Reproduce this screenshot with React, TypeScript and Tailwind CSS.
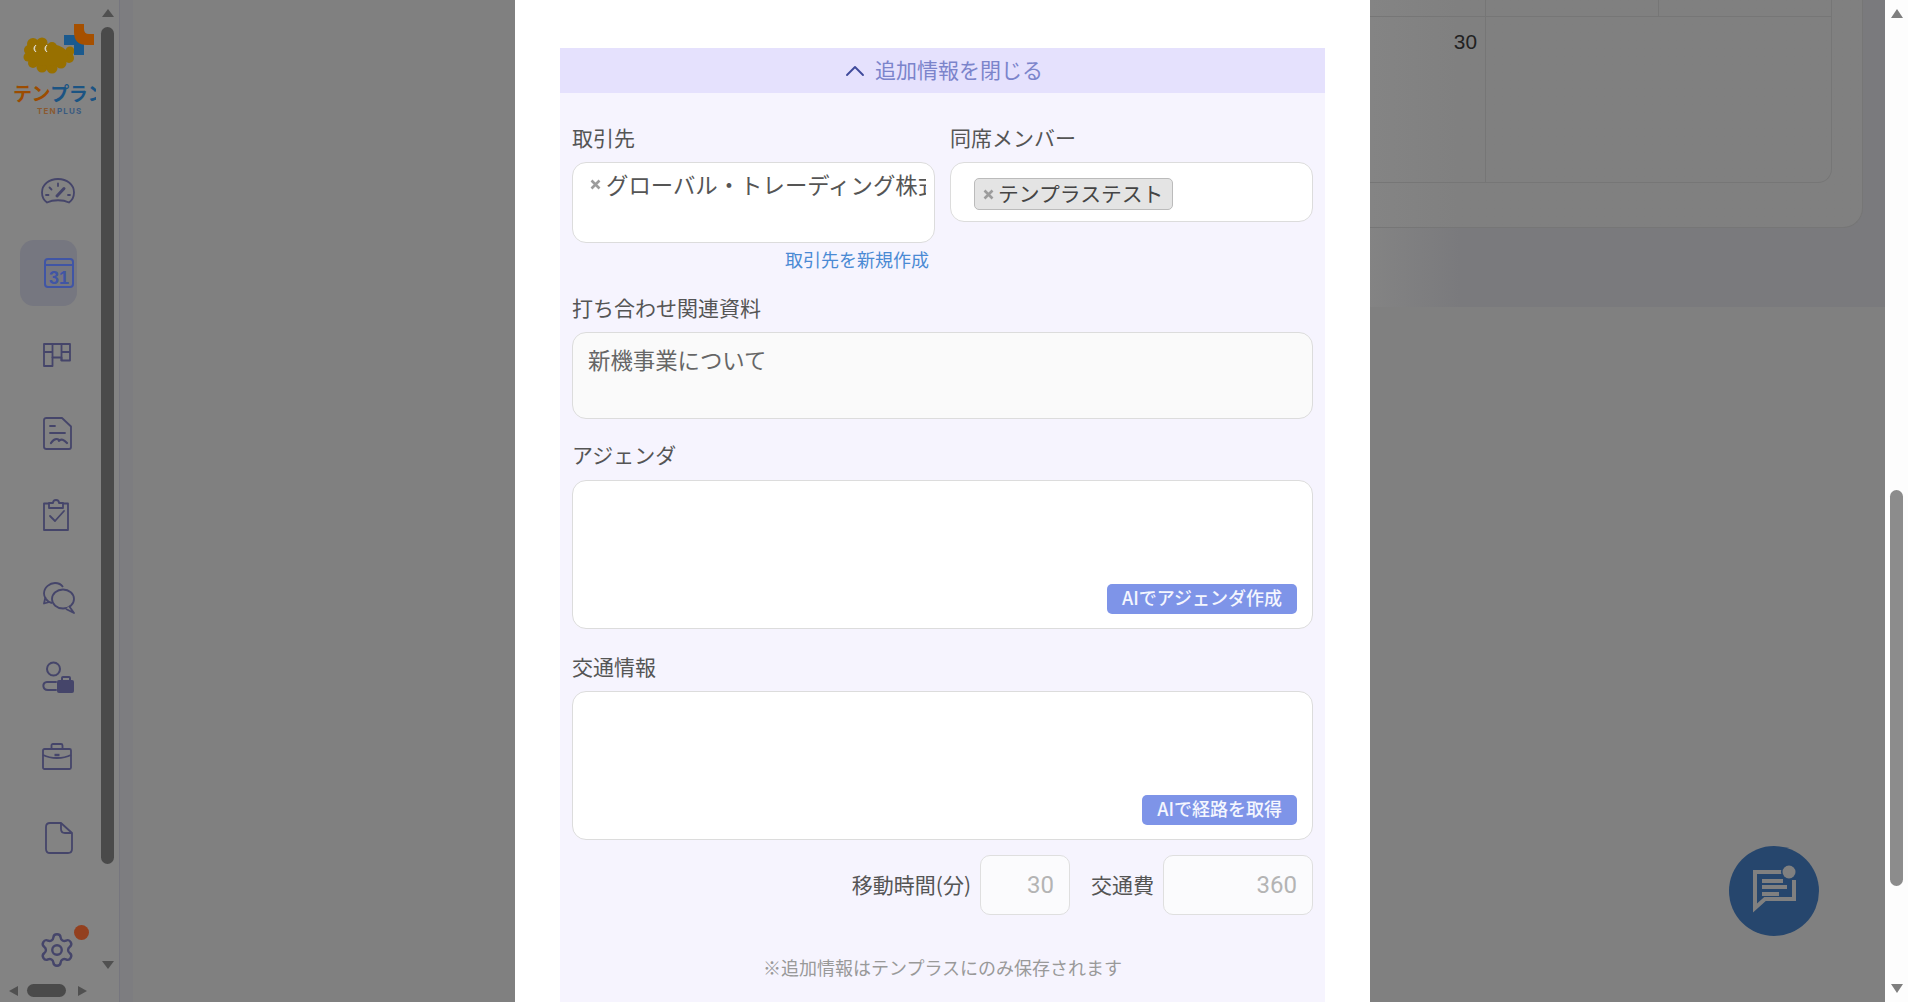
import { ChevronUp, Settings } from 'lucide-react';

const stroke = '#45456a';

function GaugeIcon() {
  return (
    <svg width="34" height="26" viewBox="0 0 34 26" fill="none" stroke={stroke} strokeWidth="1.8" strokeLinecap="round">
      <path d="M6 24.5 C2.5 22 1 18 1 14.5 C1 6.5 8 1 17 1 C26 1 33 6.5 33 14.5 C33 18 31.5 22 28 24.5 C22 21.5 12 21.5 6 24.5Z" />
      <path d="M17 5.5 V8 M8.5 9.5 L10.5 11.5 M5 17 H7.5 M27 17 H29" />
      <path d="M16 18 L23 10.5" strokeWidth="3" />
    </svg>
  );
}

function CalendarIcon() {
  return (
    <svg width="30" height="30" viewBox="0 0 30 30" fill="none">
      <rect x="1" y="1" width="28" height="28" rx="3" stroke="#4055a5" strokeWidth="2" />
      <path d="M1 7 H29" stroke="#4055a5" strokeWidth="2" />
      <text x="15" y="26" textAnchor="middle" fill="#4055a5" fontSize="18" fontWeight="700" fontFamily="Liberation Sans, sans-serif">31</text>
    </svg>
  );
}

function KanbanIcon() {
  return (
    <svg width="28" height="25" viewBox="0 0 28 25" fill="none" stroke={stroke} strokeWidth="1.8">
      <path d="M1 2 H27 V18.5 H18.5 V15.5 H9.5 V24 H1 Z" strokeLinejoin="round" />
      <path d="M9.5 1.5 V16 M18.5 1.5 V19 M1 10 H9.5 M18.5 10 H27" />
    </svg>
  );
}

function DocIcon() {
  return (
    <svg width="29" height="33" viewBox="0 0 29 33" fill="none" stroke={stroke} strokeWidth="1.8" strokeLinecap="round" strokeLinejoin="round">
      <path d="M3.5 1 H19 L28 9.5 V30 Q28 32 26 32 H3.5 Q1 32 1 30 V3 Q1 1 3.5 1Z" />
      <path d="M7 9 H12 M7 16 H22" />
      <path d="M8 26 C12 20 16 22 16 24 C18 21 21 23 24 26" strokeWidth="2.2" />
    </svg>
  );
}

function ClipboardIcon() {
  return (
    <svg width="26" height="32" viewBox="0 0 26 32" fill="none" stroke={stroke} strokeWidth="1.8" strokeLinejoin="round">
      <path d="M6 4.5 H1 V31 H25 V4.5 H20" />
      <path d="M6 9 V4 H10 Q10 1 13 1 Q16 1 16 4 H20 V9 Z" />
      <path d="M7 17 L12 22 L21 12" strokeLinecap="round" />
    </svg>
  );
}

function ChatsIcon() {
  return (
    <svg width="32" height="32" viewBox="0 0 32 32" fill="none" stroke={stroke} strokeWidth="1.8" strokeLinejoin="round">
      <path d="M9 21 C3 20 1 14 1 11.5 C1 5 7 1 12 1 C15 1 18 2 20 5" />
      <path d="M2.5 15 L1 21.5 L6.5 20" />
      <ellipse cx="20" cy="17" rx="11" ry="9.5" />
      <path d="M26 24 L31 31 L23 27" fill="#838383" />
    </svg>
  );
}

function UserLockIcon() {
  return (
    <svg width="36" height="36" viewBox="40 660 36 36" fill="none" stroke={stroke} strokeWidth="2">
      <circle cx="53.5" cy="669" r="6.5" />
      <path d="M56 690 H48 C42 690 42 682 47 682 H56" strokeLinecap="round" />
      <path d="M62 681 V678 Q62 677 63 677 H69 Q70 677 70 678 V681" />
      <rect x="57" y="680" width="17" height="13" rx="2" fill={stroke} stroke="none" />
    </svg>
  );
}

function BriefcaseIcon() {
  return (
    <svg width="30" height="27" viewBox="0 0 30 27" fill="none" stroke={stroke} strokeWidth="1.8" strokeLinejoin="round">
      <rect x="1" y="6" width="28" height="20" rx="1.5" />
      <path d="M9.5 6 V2.5 Q9.5 1 11 1 H19 Q20.5 1 20.5 2.5 V6" />
      <path d="M1 12 C9 16 21 16 29 12" />
      <path d="M12.5 12 H17.5" strokeWidth="2.4" />
    </svg>
  );
}

function FileIcon() {
  return (
    <svg width="28" height="32" viewBox="0 0 28 32" fill="none" stroke={stroke} strokeWidth="1.8" strokeLinejoin="round">
      <path d="M5 1 H16 L27 11 V27 Q27 31 23 31 H5 Q1 31 1 27 V5 Q1 1 5 1Z" />
      <path d="M16 1 V7 Q16 11 20 11 H27" />
    </svg>
  );
}

function RemoveMark() {
  return (
    <svg width="11" height="11" viewBox="0 0 11 11" className="shrink-0" stroke="#9c9c9c" strokeWidth="2.6">
      <path d="M1.5 1.5 L9.5 9.5 M9.5 1.5 L1.5 9.5" />
    </svg>
  );
}

const navItems = [
  { icon: GaugeIcon, active: false, cls: 'pl-[41px]' },
  { icon: CalendarIcon, active: true, cls: 'pt-[3px]' },
  { icon: KanbanIcon, active: false, cls: 'pl-[43px] pt-[3px]' },
  { icon: DocIcon, active: false, cls: 'pl-[43px]' },
  { icon: ClipboardIcon, active: false, cls: 'pl-[43px]' },
  { icon: ChatsIcon, active: false, cls: 'pl-[43px] pt-[4px]' },
  { icon: UserLockIcon, active: false, cls: 'pl-[40px] pt-[2px]' },
  { icon: BriefcaseIcon, active: false, cls: 'pl-[42px] pb-[2px]' },
  { icon: FileIcon, active: false, cls: 'pl-[45px] pb-[2px]' },
];

function Logo() {
  return (
    <div className="h-[150px] w-[96px] overflow-hidden">
      <svg width="96" height="78" viewBox="0 0 96 78" className="block">
        <g fill="#987000">
          <circle cx="33" cy="44" r="6" />
          <circle cx="42" cy="43" r="5.5" />
          <circle cx="29" cy="50" r="5" />
          <circle cx="28" cy="57" r="4.5" />
          <circle cx="33" cy="63" r="5" />
          <circle cx="42" cy="67" r="5.5" />
          <circle cx="52" cy="68" r="5.5" />
          <circle cx="61" cy="63" r="5.5" />
          <circle cx="69" cy="58" r="5" />
          <circle cx="70" cy="51" r="4.5" />
          <circle cx="52" cy="47" r="5" />
          <ellipse cx="48" cy="55" rx="20" ry="11" />
        </g>
        <path d="M36 45 A4 4 0 0 0 36 52 A5 5 0 0 1 36 45Z M47 45 A4 4 0 0 0 47 52 A5 5 0 0 1 47 45Z" fill="#ddd8c8" stroke="#ddd8c8" />
        <path d="M64 35 H84 V55 H74 V45 H64 Z" fill="#1b5a8e" />
        <path d="M74 24 H84 V29 Q84 34 89 34 H94 V45 H87 Q74 45 74 32 Z" fill="#a65000" />
      </svg>
      <div className="h-[28px] flex items-center overflow-hidden whitespace-nowrap pl-[13px] text-[19px] font-bold leading-none tracking-[-0.4px]">
        <span className="text-[#9c4c00]">テン</span>
        <span className="text-[#1b5483]">プラン</span>
      </div>
      <div className="pl-[37px] font-['Inter',sans-serif] text-[8px] font-bold leading-[10px] tracking-[1.2px]">
        <span className="text-[#8a5a30]">TEN</span>
        <span className="text-[#3a5a80]">PLUS</span>
      </div>
    </div>
  );
}

function Sidebar() {
  return (
    <aside className="flex w-[120px] shrink-0 border-r border-[#76767e] bg-[#838383]">
      <div className="flex w-[101px] flex-col">
        <Logo />
        <nav>
          {navItems.map(({ icon: Icon, active, cls }, i) => (
            <div key={i} className={`flex h-[81px] items-center ${cls}`}>
              {active ? (
                <div className="ml-[20px] flex h-[66px] w-[57px] items-center rounded-[14px] bg-[#767780] pl-[24px]">
                  <Icon />
                </div>
              ) : (
                <Icon />
              )}
            </div>
          ))}
        </nav>
        <div className="relative mt-auto h-[40px] pl-[38px]">
          <Settings size={38} color={stroke} strokeWidth={1.5} className="relative -top-[3px]" />
          <span className="absolute left-[74px] -top-[9px] h-[15px] w-[15px] rounded-full bg-[#93401f]" />
        </div>
        <div className="mb-[5px] mt-[10px] flex h-[13px] items-center pl-[9px]">
          <span className="h-0 w-0 border-y-[5px] border-r-[9px] border-y-transparent border-r-[#505050]" />
          <span className="ml-[9px] h-[13px] w-[39px] rounded-full bg-[#4a4a4a]" />
          <span className="ml-[12px] h-0 w-0 border-y-[5px] border-l-[9px] border-y-transparent border-l-[#505050]" />
        </div>
      </div>
      <div className="flex w-[13px] flex-col items-center pt-[9px]">
        <span className="h-0 w-0 border-x-[6px] border-b-[8px] border-x-transparent border-b-[#505050]" />
        <span className="mt-[10px] h-[837px] w-[13px] rounded-full bg-[#4a4a4a]" />
        <span className="mt-[97px] h-0 w-0 border-x-[6px] border-t-[8px] border-x-transparent border-t-[#505050]" />
      </div>
    </aside>
  );
}

function MainBehind() {
  return (
    <main className="relative flex min-w-0 flex-1 bg-[#808080]">
      <div className="w-[13px] shrink-0 bg-[#7d7d80]" />
      <div className="w-[382px] shrink-0" />
      <div className="flex-1">
        <div className="h-[307px] bg-linear-to-r from-[#848484] from-[62%] to-[#7a7a7d] to-[69%] pr-[22px]">
          <div className="h-[228px] rounded-br-[20px] border-b border-r border-[#767676] bg-linear-to-r from-[#858585] from-[62%] to-[#808080] to-[70%] pr-[30px]">
            <div className="flex h-[183px] flex-col rounded-br-[14px] border-b border-r border-[#767676]">
              <div className="flex h-[17px] border-b border-[#767676]">
                <div className="flex-1 border-r border-[#767676]" />
                <div className="w-[173px] border-r border-[#767676]" />
                <div className="w-[172px]" />
              </div>
              <div className="flex flex-1">
                <div className="flex-1 border-r border-[#767676] pr-[8px] pt-[12px] text-right font-['Liberation_Sans',sans-serif] text-[20.8px] leading-[26px] text-[#222]">30</div>
                <div className="w-[345px]" />
              </div>
            </div>
          </div>
        </div>
      </div>
      <button className="absolute left-[1609px] top-[846px] flex h-[90px] w-[90px] items-center justify-center rounded-full bg-[#26466d]">
        <svg width="90" height="90" viewBox="0 0 90 90" fill="none">
          <path d="M58 26 H26 V62 L36 53 H65 V34" stroke="#808080" strokeWidth="4" />
          <path d="M33 35 H54 M33 41 H58 M33 48 H50" stroke="#808080" strokeWidth="4" />
          <circle cx="60" cy="26" r="8" fill="#26466d" />
          <circle cx="60" cy="26" r="6.5" fill="#808080" />
        </svg>
      </button>
    </main>
  );
}

function PageScrollbar() {
  return (
    <div className="flex w-[23px] shrink-0 flex-col items-center bg-[#fdfdfd] pt-[9px]">
      <span className="h-0 w-0 border-x-[6px] border-b-[9px] border-x-transparent border-b-[#7f7f7f]" />
      <span className="mt-[472px] h-[396px] w-[13px] rounded-full bg-[#8c8c8c]" />
      <span className="mt-[98px] h-0 w-0 border-x-[6px] border-t-[9px] border-x-transparent border-t-[#7f7f7f]" />
    </div>
  );
}

const labelCls = 'block h-[30px] text-[21px] leading-[28px] text-[#555]';
const boxCls = 'rounded-[14px] border border-[#dcdcdc] bg-white';

function TextBox({ action }: { action: string }) {
  return (
    <div className="relative">
      <textarea readOnly className={`block w-full resize-none outline-none ${boxCls}`} />
      <button className="absolute bottom-[15px] right-[16px] flex h-[30px] items-center rounded-[5px] bg-[#7e94e8] px-[15px] pb-[3px] text-[18px] font-medium text-[#f4f6fe]">
        {action}
      </button>
    </div>
  );
}

function Modal() {
  return (
    <div className="absolute left-[515px] top-0 h-full w-[855px] overflow-hidden bg-white px-[45px] pt-[48px] font-['Noto_Sans_CJK_JP',sans-serif]">
      <div className="h-full bg-[#f6f4fe]">
        <div className="flex h-[45px] items-center justify-center bg-[#e5e1fd] pr-[3px] text-[21px] leading-[41px] text-[#7b84cb]">
          <ChevronUp size={32} color="#3f4a9b" strokeWidth={1.4} className="mr-[4px]" />
          <span className="pb-[2px]">追加情報を閉じる</span>
        </div>
        <div className="px-[12px] pt-[30px]">
          <div className="grid grid-cols-[363px_363px] gap-x-[15px]">
            <div>
              <label className={labelCls}>取引先</label>
              <div className={`mt-[9px] h-[81px] pl-[17px] pr-[8px] pt-[5px] ${boxCls}`}>
                <div className="flex items-center overflow-hidden whitespace-nowrap text-[22.4px] leading-[32px] text-[#555]">
                  <RemoveMark />
                  <span className="ml-[5px]">グローバル・トレーディング株式会社</span>
                </div>
              </div>
              <div className="h-[35px] pr-[6px] text-right text-[18px] leading-[33px] text-[#4a8ad4]">取引先を新規作成</div>
            </div>
            <div>
              <label className={labelCls}>同席メンバー</label>
              <div className={`mt-[9px] h-[60px] pl-[23px] pt-[15px] ${boxCls}`}>
                <span className="inline-flex h-[32px] items-center rounded-[5px] border border-[#bbb] bg-[#e4e4e4] pl-[8px] pr-[9px] text-[20.8px] text-[#444]">
                  <RemoveMark />
                  <span className="ml-[4px]">テンプラステスト</span>
                </span>
              </div>
            </div>
          </div>

          <label className={`mt-[15px] ${labelCls}`}>打ち合わせ関連資料</label>
          <div className="mt-[9px] h-[87px] rounded-[14px] border border-[#dcdcdc] bg-[#fafafa] px-[15px] pt-[9px] text-[22.4px] leading-[34px] text-[#666]">
            新機事業について
          </div>

          <label className={`mt-[21px] ${labelCls}`}>アジェンダ</label>
          <div className="mt-[10px] [&_textarea]:h-[149px]">
            <TextBox action="AIでアジェンダ作成" />
          </div>

          <label className={`mt-[23px] ${labelCls}`}>交通情報</label>
          <div className="mt-[9px] [&_textarea]:h-[149px]">
            <TextBox action="AIで経路を取得" />
          </div>

          <div className="mt-[15px] flex items-center justify-end text-[21px] text-[#555]">
            <span>移動時間(分)</span>
            <input readOnly value="30" className="ml-[9px] h-[60px] w-[90px] rounded-[10px] border border-[#dfdfdf] bg-[#fbfbfd] pr-[15px] text-right font-['Roboto',sans-serif] text-[24px] text-[#b4b4b4] outline-none" />
            <span className="ml-[21px]">交通費</span>
            <input readOnly value="360" className="ml-[9px] h-[60px] w-[150px] rounded-[10px] border border-[#dfdfdf] bg-[#fbfbfd] pr-[15px] text-right font-['Roboto',sans-serif] text-[24px] text-[#b4b4b4] outline-none" />
          </div>

          <p className="mt-[39px] text-center text-[18px] leading-[26px] text-[#999]">※追加情報はテンプラスにのみ保存されます</p>
        </div>
      </div>
    </div>
  );
}

export default function App() {
  return (
    <div className="relative flex h-screen w-full overflow-hidden font-['Noto_Sans_CJK_JP',sans-serif]">
      <Sidebar />
      <MainBehind />
      <PageScrollbar />
      <Modal />
    </div>
  );
}
